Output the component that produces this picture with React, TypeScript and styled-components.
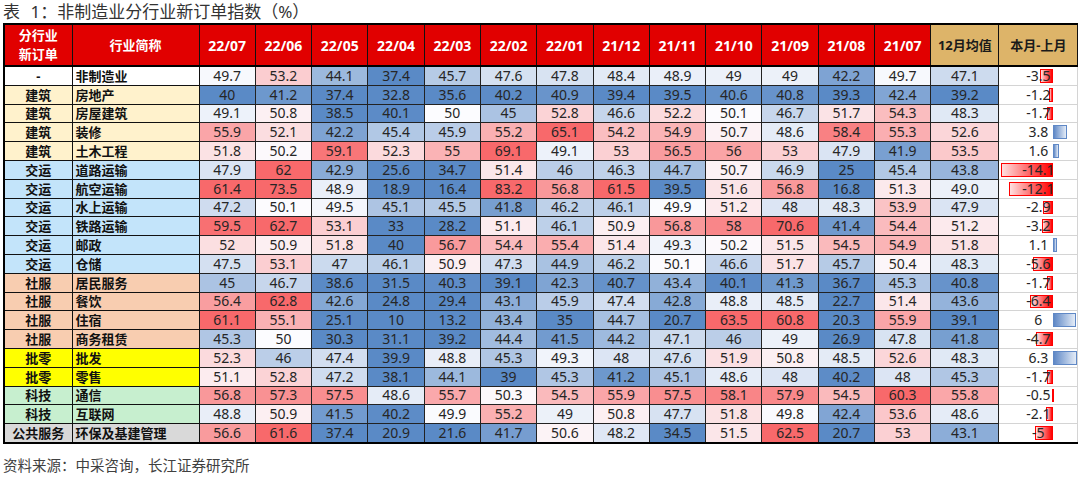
import styled, { createGlobalStyle } from "styled-components";

const GlobalStyle = createGlobalStyle`
  body {
    margin: 0;
    background: #ffffff;
  }
`;

type Group = "none" | "build" | "trans" | "social" | "retail" | "tech" | "public";

const groupColors: Record<Group, string> = {
  none: "#ffffff",
  build: "#fff2cc",
  trans: "#c3e4fa",
  social: "#f8cdb0",
  retail: "#ffff00",
  tech: "#c7efcf",
  public: "#d9d9d9",
};

const months = [
  "22/07", "22/06", "22/05", "22/04", "22/03", "22/02", "22/01",
  "21/12", "21/11", "21/10", "21/09", "21/08", "21/07",
];

type Row = {
  cat: string;
  group: Group;
  name: string;
  values: number[];
  avg: string;
  diff: number;
};

const rows: Row[] = [
  { cat: "-", group: "none", name: "非制造业", values: [49.7, 53.2, 44.1, 37.4, 45.7, 47.6, 47.8, 48.4, 48.9, 49, 49, 42.2, 49.7], avg: "47.1", diff: -3.5 },
  { cat: "建筑", group: "build", name: "房地产", values: [40, 41.2, 37.4, 32.8, 35.6, 40.2, 40.9, 39.4, 39.5, 40.6, 40.8, 39.3, 42.4], avg: "39.2", diff: -1.2 },
  { cat: "建筑", group: "build", name: "房屋建筑", values: [49.1, 50.8, 38.5, 40.1, 50, 45, 52.8, 46.6, 52.2, 50.1, 46.7, 51.7, 54.3], avg: "48.3", diff: -1.7 },
  { cat: "建筑", group: "build", name: "装修", values: [55.9, 52.1, 42.2, 45.4, 45.9, 55.2, 65.1, 54.2, 54.9, 50.7, 48.6, 58.4, 55.3], avg: "52.6", diff: 3.8 },
  { cat: "建筑", group: "build", name: "土木工程", values: [51.8, 50.2, 59.1, 52.3, 55, 69.1, 49.1, 53, 56.5, 56, 53, 47.9, 41.9], avg: "53.5", diff: 1.6 },
  { cat: "交运", group: "trans", name: "道路运输", values: [47.9, 62, 42.9, 25.6, 34.7, 51.4, 46, 46.3, 44.7, 50.7, 46.9, 25, 45.4], avg: "43.8", diff: -14.1 },
  { cat: "交运", group: "trans", name: "航空运输", values: [61.4, 73.5, 48.9, 18.9, 16.4, 83.2, 56.8, 61.5, 39.5, 51.6, 56.8, 16.8, 51.3], avg: "49.0", diff: -12.1 },
  { cat: "交运", group: "trans", name: "水上运输", values: [47.2, 50.1, 49.5, 45.1, 45.5, 41.8, 46.2, 46.1, 49.9, 51.2, 48, 48.3, 53.9], avg: "47.9", diff: -2.9 },
  { cat: "交运", group: "trans", name: "铁路运输", values: [59.5, 62.7, 53.1, 33, 28.2, 51.1, 46.1, 50.9, 56.8, 58, 70.6, 41.4, 54.4], avg: "51.2", diff: -3.2 },
  { cat: "交运", group: "trans", name: "邮政", values: [52, 50.9, 51.8, 40, 56.7, 54.4, 55.4, 51.4, 49.3, 50.2, 51.5, 54.5, 54.9], avg: "51.8", diff: 1.1 },
  { cat: "交运", group: "trans", name: "仓储", values: [47.5, 53.1, 47, 46.1, 50.9, 47.3, 44.9, 46.2, 50.1, 46.6, 51.7, 45.7, 50.4], avg: "48.3", diff: -5.6 },
  { cat: "社服", group: "social", name: "居民服务", values: [45, 46.7, 38.6, 31.5, 40.3, 39.1, 42.3, 40.7, 43.4, 40.1, 41.3, 36.7, 45.3], avg: "40.8", diff: -1.7 },
  { cat: "社服", group: "social", name: "餐饮", values: [56.4, 62.8, 42.6, 24.8, 29.4, 43.1, 45.9, 47.4, 42.8, 48.8, 48.5, 22.7, 51.4], avg: "43.6", diff: -6.4 },
  { cat: "社服", group: "social", name: "住宿", values: [61.1, 55.1, 25.1, 10, 13.2, 43.4, 35, 44.7, 20.7, 63.5, 60.8, 20.3, 55.9], avg: "39.1", diff: 6 },
  { cat: "社服", group: "social", name: "商务租赁", values: [45.3, 50, 30.3, 31.1, 39.2, 44.4, 41.5, 44.2, 47.1, 46, 49, 26.9, 47.8], avg: "41.8", diff: -4.7 },
  { cat: "批零", group: "retail", name: "批发", values: [52.3, 46, 47.4, 39.9, 48.8, 45.3, 49.3, 48, 47.6, 51.9, 50.8, 48.5, 52.6], avg: "48.3", diff: 6.3 },
  { cat: "批零", group: "retail", name: "零售", values: [51.1, 52.8, 47.2, 38.1, 44.1, 39, 45.3, 41.2, 45.1, 48.6, 48, 40.2, 48], avg: "45.3", diff: -1.7 },
  { cat: "科技", group: "tech", name: "通信", values: [56.8, 57.3, 57.5, 48.6, 55.7, 50.3, 54.5, 55.9, 57.5, 58.1, 57.9, 54.5, 60.3], avg: "55.8", diff: -0.5 },
  { cat: "科技", group: "tech", name: "互联网", values: [48.8, 50.9, 41.5, 40.2, 49.9, 55.2, 49, 50.8, 47.7, 51.8, 49.8, 42.4, 53.6], avg: "48.6", diff: -2.1 },
  { cat: "公共服务", group: "public", name: "环保及基建管理", values: [56.6, 61.6, 37.4, 20.9, 21.6, 41.7, 50.6, 48.2, 34.5, 51.5, 62.5, 20.7, 53], avg: "43.1", diff: -5 },
];

const RED = [248, 105, 107];
const WHITE = [252, 252, 255];
const BLUE = [90, 138, 198];

// red-white-blue scale centred on 50
const heat = (v: number) => {
  const t = Math.max(-1, Math.min(1, (v - 50) / 10));
  const to = t >= 0 ? RED : BLUE;
  const k = Math.abs(t);
  const c = WHITE.map((w, i) => Math.round(w + (to[i] - w) * k));
  return `rgb(${c[0]}, ${c[1]}, ${c[2]})`;
};

const AXIS = 54;
const SCALE = 3.7;

const Page = styled.div`
  width: 1080px;
  padding: 0 3px;
  box-sizing: border-box;
  font-family: "Noto Sans", "Noto Sans CJK SC", sans-serif;
  color: #262626;
`;

const Title = styled.div`
  height: 23px;
  line-height: 23px;
  font-size: 17px;
  color: #333333;
  word-spacing: 6px;
  white-space: nowrap;
`;

const Table = styled.table`
  width: 1074px;
  table-layout: fixed;
  border-collapse: collapse;
  border-top: 2px solid #000;
  border-bottom: 2px solid #000;
  border-left: 2px solid #000;
`;

const HeadCell = styled.th<{ $tan?: boolean; $small?: boolean }>`
  height: 40px;
  padding: 0;
  background: ${(p) => (p.$tan ? "#ddb469" : "#e10000")};
  color: ${(p) => (p.$tan ? "#1a1a1a" : "#ffffff")};
  font-size: ${(p) => (p.$small ? "13px" : "14px")};
  font-weight: 700;
  line-height: 19px;
  text-align: center;
  border: 1px solid #111;
  border-bottom: 2px solid #000;
`;

const CatCell = styled.td<{ $group: Group }>`
  height: 17.8px;
  padding: 0;
  background: ${(p) => groupColors[p.$group]};
  font-size: 13px;
  font-weight: 700;
  line-height: 16px;
  color: #111;
  text-align: center;
  border: 1px solid #111;
  white-space: nowrap;
  overflow: hidden;
`;

const NameCell = styled(CatCell)`
  text-align: left;
  padding-left: 3px;
`;

const ValueCell = styled.td<{ $bg: string }>`
  height: 17.8px;
  padding: 0;
  background: ${(p) => p.$bg};
  font-size: 14px;
  line-height: 16px;
  text-align: center;
  border: 1px solid #222;
`;

const DiffCell = styled.td`
  position: relative;
  height: 17.8px;
  padding: 0;
  font-size: 14px;
  line-height: 16px;
  text-align: center;
  background: #ffffff;
  border-top: 1px solid #d4d4d4;
  border-right: 1px solid #d4d4d4;
`;

const DiffText = styled.span`
  position: relative;
  z-index: 1;
`;

const Bar = styled.div<{ $neg: boolean }>`
  position: absolute;
  top: 2px;
  bottom: 2px;
  box-sizing: border-box;
  border: 1px solid ${(p) => (p.$neg ? "#ff0000" : "#5f88c6")};
  background: ${(p) =>
    p.$neg
      ? "linear-gradient(to right, #ffe0e0, #ff0000)"
      : "linear-gradient(to right, #5f88c6, #e4ecf7)"};
`;

const Source = styled.div`
  margin-top: 11px;
  font-size: 14.5px;
  line-height: 20px;
  color: #404040;
`;

const DiffBar = ({ value }: { value: number }) => {
  const w = Math.abs(value) * SCALE;
  const left = value < 0 ? AXIS - w : AXIS;
  return <Bar $neg={value < 0} style={{ left, width: w }} />;
};

export default function App() {
  return (
    <>
      <GlobalStyle />
      <Page>
        <Title>表 1：非制造业分行业新订单指数（%）</Title>
        <Table>
          <colgroup>
            <col style={{ width: 68 }} />
            <col style={{ width: 127 }} />
            {months.map((m) => (
              <col key={m} style={{ width: 56.3 }} />
            ))}
            <col style={{ width: 68 }} />
            <col style={{ width: 79 }} />
          </colgroup>
          <thead>
            <tr>
              <HeadCell $small>
                分行业
                <br />
                新订单
              </HeadCell>
              <HeadCell $small>行业简称</HeadCell>
              {months.map((m) => (
                <HeadCell key={m}>{m}</HeadCell>
              ))}
              <HeadCell $tan $small>
                12月均值
              </HeadCell>
              <HeadCell $tan $small>
                本月-上月
              </HeadCell>
            </tr>
          </thead>
          <tbody>
            {rows.map((r) => (
              <tr key={r.name}>
                <CatCell $group={r.group}>{r.cat}</CatCell>
                <NameCell $group={r.group}>{r.name}</NameCell>
                {r.values.map((v, i) => (
                  <ValueCell key={i} $bg={heat(v)}>
                    {v}
                  </ValueCell>
                ))}
                <ValueCell $bg={heat(parseFloat(r.avg))}>{r.avg}</ValueCell>
                <DiffCell>
                  <DiffBar value={r.diff} />
                  <DiffText>{r.diff}</DiffText>
                </DiffCell>
              </tr>
            ))}
          </tbody>
        </Table>
        <Source>资料来源：中采咨询，长江证券研究所</Source>
      </Page>
    </>
  );
}
